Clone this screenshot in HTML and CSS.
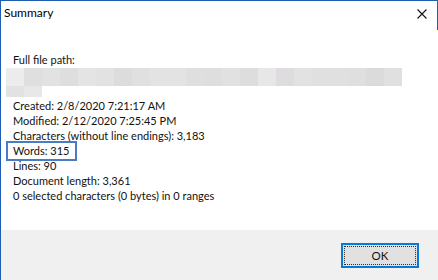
FILE: index.html
```html
<!DOCTYPE html>
<html>
<head>
<meta charset="utf-8">
<link rel="stylesheet" href="styles.css">
</head>
<body>
<div class="window">
  <div class="titlebar">
    <span class="title">Summary</span>
    <svg class="close" width="10" height="10" viewBox="0 0 10 10"><path d="M0.5 0.5 L9.5 9.5 M9.5 0.5 L0.5 9.5" stroke="#111" stroke-width="1.1" fill="none"/></svg>
  </div>
  <div class="content">
    <div class="line">Full file path:</div>
    <div class="redact">
      <div class="row r1">
        <i style="background:#ececec"></i><i style="background:#dfdfdf"></i><i style="background:#e2e2e2"></i><i style="background:#dedede"></i><i style="background:#e4e4e4"></i><i style="background:#e2e2e2"></i><i style="background:#dcdcdc"></i><i style="background:#e0e0e0"></i><i style="background:#e3e3e3"></i><i style="background:#e3e3e3"></i><i style="background:#dfdfdf"></i><i style="background:#dedede"></i><i style="background:#e1e1e1"></i><i style="background:#dddddd"></i><i style="background:#e6e7e6"></i><i style="background:#dedcde"></i><i style="background:#e2e2e2"></i><i style="background:#e0e0e0"></i><i style="background:#e0e0e0"></i><i style="background:#dfdfdf"></i><i style="background:#dbdbdb"></i><i style="background:#e0e0e0"></i>
      </div>
      <div class="row r2">
        <i style="background:#e3e2e2"></i><i style="background:#e7e8e7"></i>
      </div>
    </div>
    <div class="line">Created: 2/8/2020 7:21:17 AM</div>
    <div class="line">Modified: 2/12/2020 7:25:45 PM</div>
    <div class="line">Characters (without line endings): 3,183</div>
    <div class="line"><span class="highlight">Words: 315</span></div>
    <div class="line">Lines: 90</div>
    <div class="line">Document length: 3,361</div>
    <div class="line">0 selected characters (0 bytes) in 0 ranges</div>
  </div>
  <div class="footer">
    <button class="ok"><span class="focus">OK</span></button>
  </div>
</div>
</body>
</html>
```
FILE: styles.css
```css
html, body {
  margin: 0;
  padding: 0;
  background: #fff;
}
.window {
  width: 438px;
  height: 280px;
  box-sizing: border-box;
  border-left: 1px solid #1f5db5;
  border-top: 1px solid #1f5db5;
  display: flex;
  flex-direction: column;
  font-family: Lato, "Open Sans", sans-serif;
  font-size: 11px;
  color: #111;
}
.titlebar {
  height: 29px;
  display: flex;
  align-items: flex-start;
  justify-content: space-between;
  border-right: 1px solid #1f5db5;
  padding-left: 3px;
}
.title {
  font-size: 12px;
  line-height: 16px;
  margin-top: 4px;
  color: #000;
}
.close {
  margin-top: 8px;
  margin-right: 10px;
}
.content {
  flex: 1;
  padding: 22px 0 0 12px;
  line-height: 15px;
}
.line {
  height: 15px;
  white-space: nowrap;
}
.redact {
  margin: 1px 0 1px -7px;
}
.row {
  display: flex;
}
.row i {
  display: block;
  width: 18px;
}
.r1 i { height: 18px; }
.r2 i { height: 11px; }
.highlight {
  display: inline-block;
  line-height: 16px;
  border: 2px solid #4a7cc6;
  padding: 0 6px 0 5px;
  margin: -3px 0 -2px -7px;
}
.footer {
  height: 50px;
  background: #f0f0f0;
  display: flex;
  justify-content: flex-end;
  align-items: flex-start;
  padding: 13px 19px 0 0;
  box-sizing: border-box;
}
.ok {
  width: 78px;
  height: 25px;
  box-sizing: border-box;
  border: 2px solid #0a78d6;
  background: #e1e1e1;
  padding: 1px;
  margin: 0;
  font-family: inherit;
  font-size: 11.5px;
  color: #111;
  display: flex;
}
.focus {
  flex: 1;
  border: 1px dotted #333;
  display: flex;
  align-items: center;
  justify-content: center;
  line-height: 16px;
}
```
